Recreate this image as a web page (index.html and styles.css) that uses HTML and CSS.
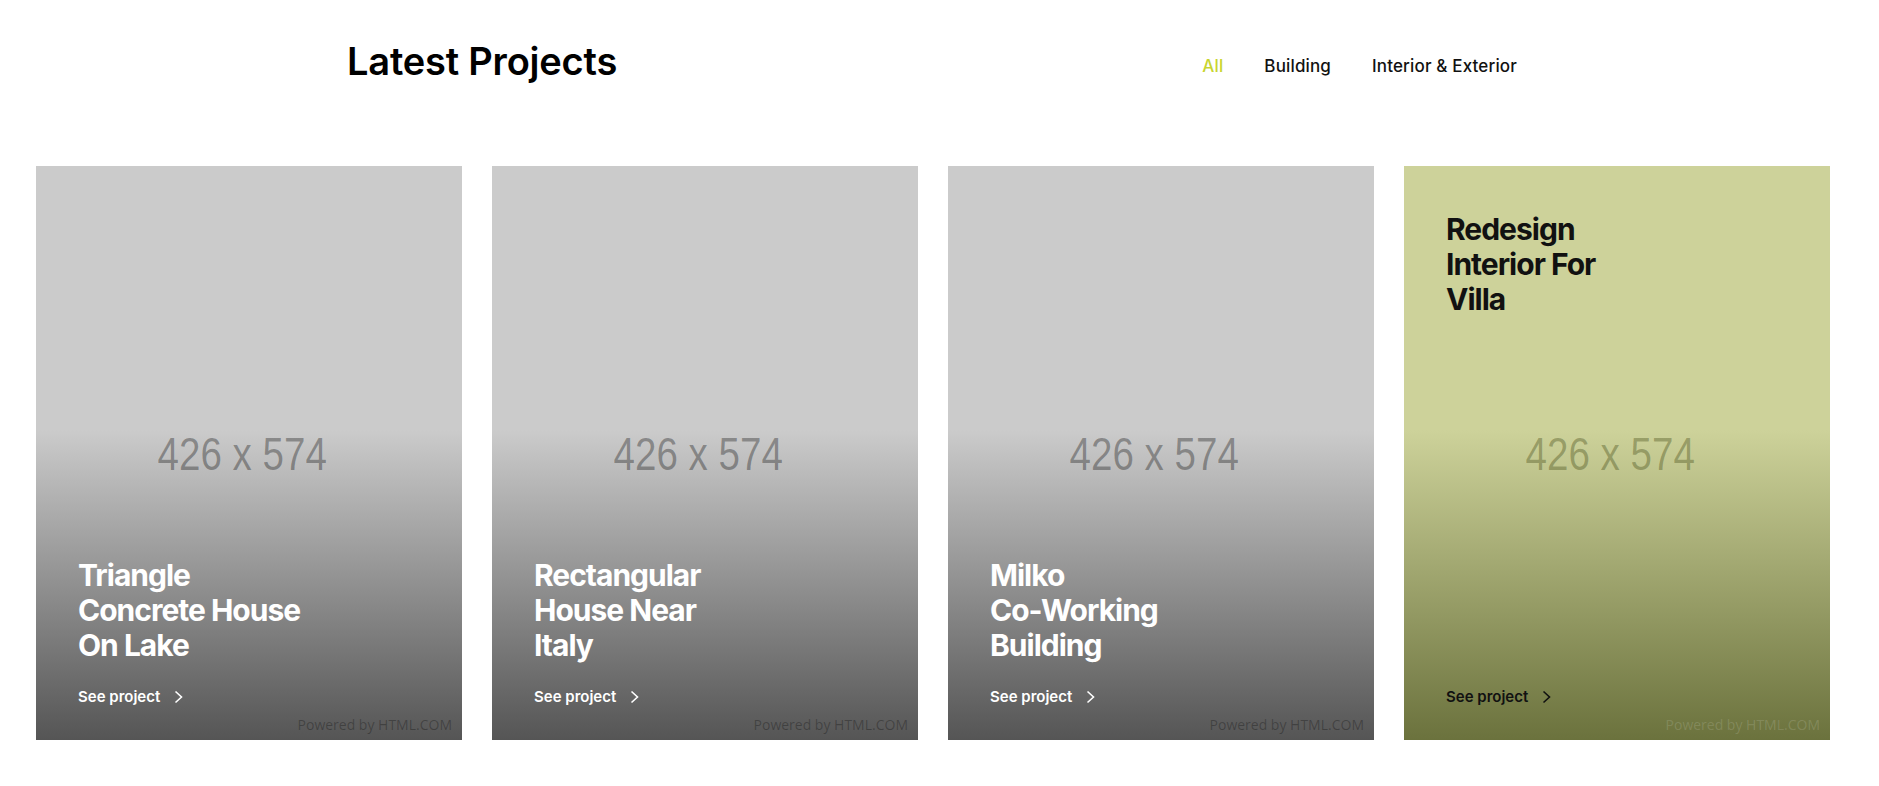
FILE: index.html
```html
<!DOCTYPE html>
<html lang="en">
<head>
<meta charset="utf-8">
<title>Latest Projects</title>
<link rel="stylesheet" href="styles.css">
</head>
<body>
<div class="page">
  <header class="header">
    <h1 class="title">Latest Projects</h1>
    <nav class="filters">
      <a class="filter active" href="#">All</a>
      <a class="filter" href="#">Building</a>
      <a class="filter" href="#">Interior &amp; Exterior</a>
    </nav>
  </header>

  <section class="cards">
    <article class="card">
      <span class="ph"><span class="ph-text">426 x 574</span></span>
      <h2 class="card-title">Triangle<br>Concrete House<br>On Lake</h2>
      <a class="see" href="#">See project <svg class="chev" width="9" height="14" viewBox="0 0 9 14"><polyline points="1.5,1.5 7.5,7 1.5,12.5" fill="none" stroke="currentColor" stroke-width="1.6"/></svg></a>
      <span class="powered">Powered by HTML.COM</span>
    </article>
    <article class="card">
      <span class="ph"><span class="ph-text">426 x 574</span></span>
      <h2 class="card-title">Rectangular<br>House Near<br>Italy</h2>
      <a class="see" href="#">See project <svg class="chev" width="9" height="14" viewBox="0 0 9 14"><polyline points="1.5,1.5 7.5,7 1.5,12.5" fill="none" stroke="currentColor" stroke-width="1.6"/></svg></a>
      <span class="powered">Powered by HTML.COM</span>
    </article>
    <article class="card">
      <span class="ph"><span class="ph-text">426 x 574</span></span>
      <h2 class="card-title">Milko<br>Co-Working<br>Building</h2>
      <a class="see" href="#">See project <svg class="chev" width="9" height="14" viewBox="0 0 9 14"><polyline points="1.5,1.5 7.5,7 1.5,12.5" fill="none" stroke="currentColor" stroke-width="1.6"/></svg></a>
      <span class="powered">Powered by HTML.COM</span>
    </article>
    <article class="card card-featured">
      <span class="ph"><span class="ph-text">426 x 574</span></span>
      <h2 class="card-title">Redesign<br>Interior For<br>Villa</h2>
      <a class="see" href="#">See project <svg class="chev" width="9" height="14" viewBox="0 0 9 14"><polyline points="1.5,1.5 7.5,7 1.5,12.5" fill="none" stroke="currentColor" stroke-width="1.6"/></svg></a>
      <span class="powered">Powered by HTML.COM</span>
    </article>
  </section>
</div>
</body>
</html>
```

FILE: styles.css
```css
* { box-sizing: border-box; }

body {
  margin: 0;
  background: #fff;
  font-family: Inter, "Noto Sans", sans-serif;
  color: #000;
}

.page {
  padding-right: 15px;
}

.header {
  width: 1170px;
  margin: 0 auto;
  padding-top: 38px;
  display: flex;
  align-items: flex-start;
  justify-content: space-between;
}

.title {
  margin: 0;
  font-size: 38px;
  font-weight: 600;
  letter-spacing: -0.2px;
  line-height: 46px;
}

.filters {
  display: flex;
  gap: 41px;
  margin-top: 17px;
}

.filter {
  text-decoration: none;
  color: #111;
  font-size: 17px;
  line-height: 22px;
  font-weight: 500;
  letter-spacing: 0.15px;
}

.filter.active {
  color: #c8d52f;
}

.cards {
  display: flex;
  gap: 30px;
  padding-left: 36px;
  margin-top: 82px;
}

.card {
  position: relative;
  width: 426px;
  height: 574px;
  flex: none;
  display: flex;
  flex-direction: column;
  padding: 0 42px 34px;
  color: #fff;
  background: linear-gradient(to bottom, #cbcbcb 0%, #cbcbcb 46%, #555 100%);
}

.ph {
  position: absolute;
  left: 0;
  right: 14px;
  top: 50%;
  transform: translateY(-50%);
  text-align: center;
}

.ph-text {
  display: inline-block;
  font-family: "Liberation Sans", Arial, sans-serif;
  font-size: 47px;
  color: rgba(0, 0, 0, 0.33);
  transform: scaleX(0.82);
}

.card-title {
  position: relative;
  margin: auto 0 0;
  font-size: 30px;
  font-weight: 700;
  line-height: 35px;
  letter-spacing: -1px;
}

.see {
  position: relative;
  margin-top: 24px;
  display: flex;
  align-items: center;
  gap: 14px;
  color: inherit;
  text-decoration: none;
  font-size: 15px;
  font-weight: 600;
  letter-spacing: 0;
}

.powered {
  position: absolute;
  right: 10px;
  bottom: 6px;
  font-family: "Open Sans", sans-serif;
  font-size: 14px;
  color: rgba(0, 0, 0, 0.28);
}

.card-featured {
  color: #111;
  background: linear-gradient(to bottom, #cdd29a 0%, #cdd29a 46%, #6b723d 100%);
}

.card-featured .ph-text {
  color: rgba(45, 52, 0, 0.33);
}

.card-featured .card-title {
  margin: 46px 0 0;
}

.card-featured .see {
  margin-top: auto;
}

.card-featured .powered {
  color: rgba(255, 255, 255, 0.14);
}
```
